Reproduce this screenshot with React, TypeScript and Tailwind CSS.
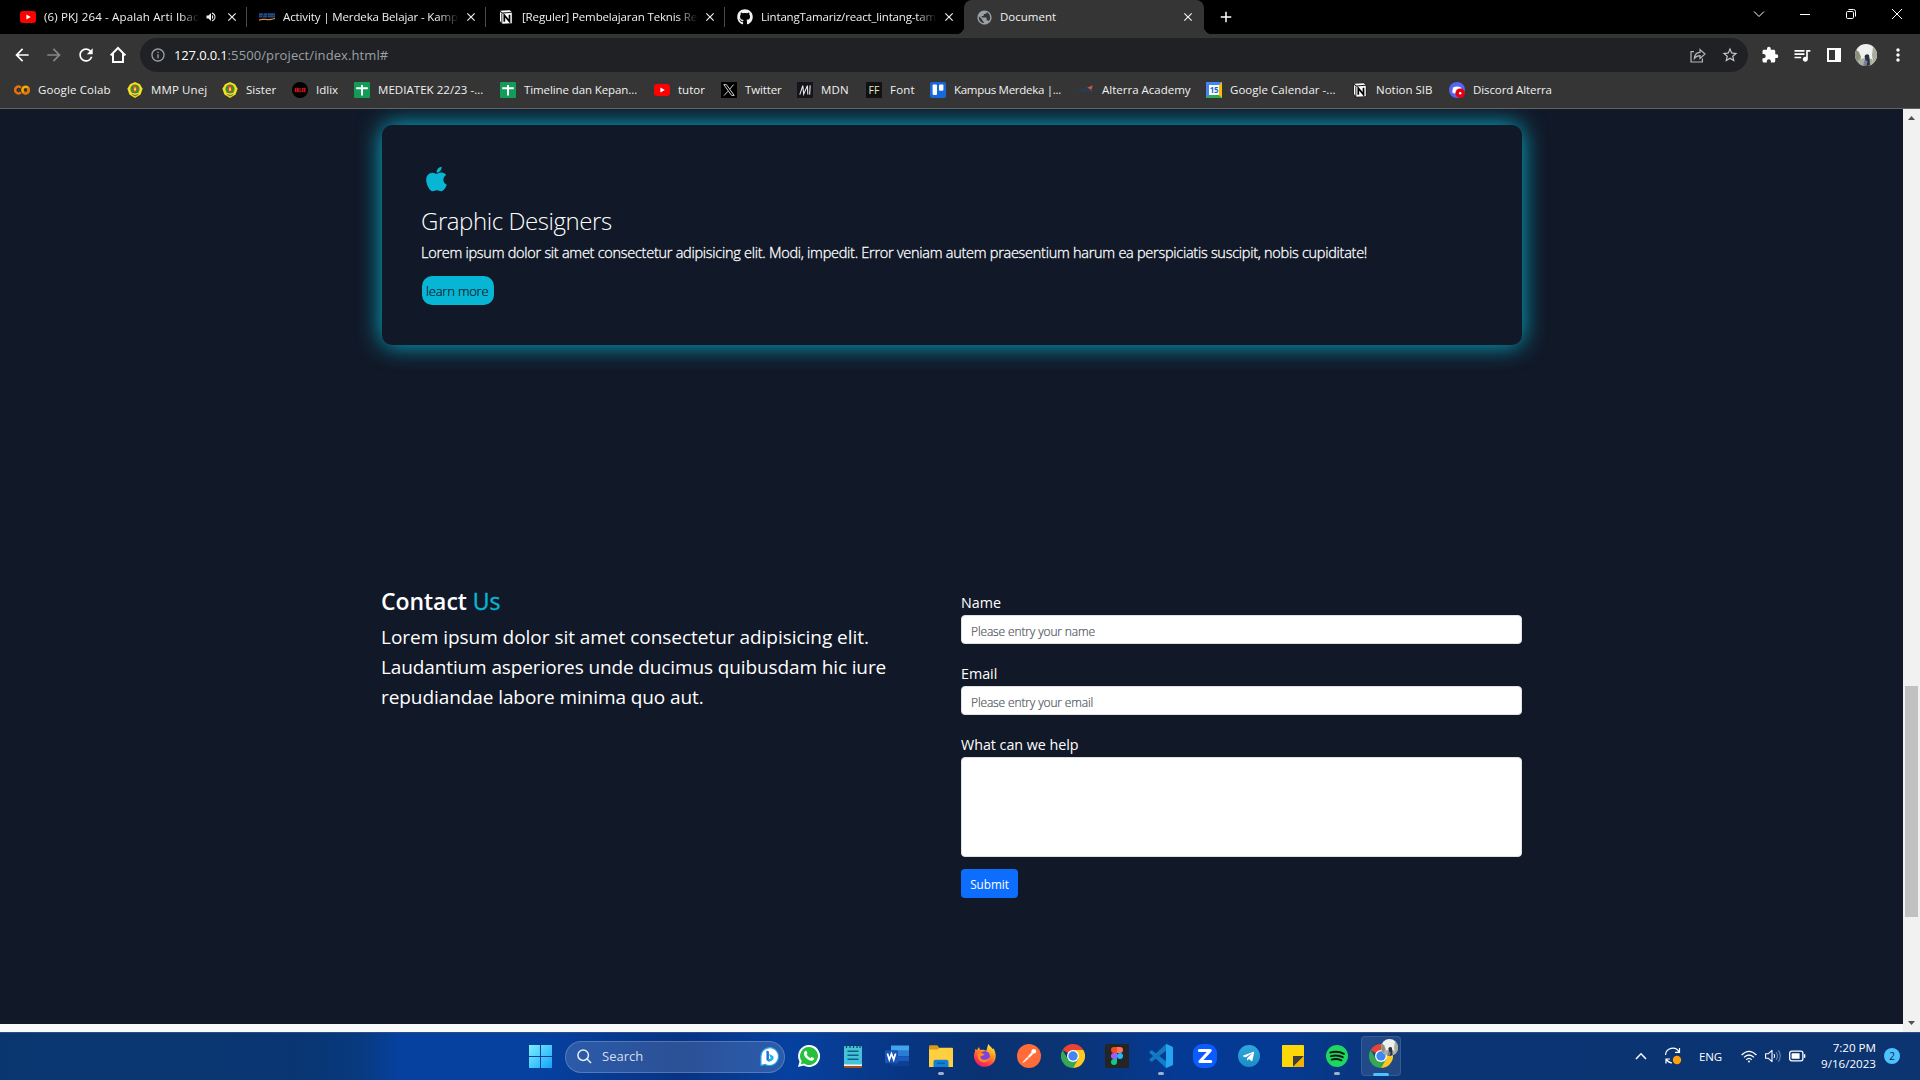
import type { ReactNode } from 'react';
import { FaApple, FaGithub, FaTelegramPlane } from 'react-icons/fa';
import {
  MdAdd,
  MdArrowBack,
  MdArrowForward,
  MdClose,
  MdExtension,
  MdInfoOutline,
  MdMoreVert,
  MdPublic,
  MdQueueMusic,
  MdRefresh,
  MdStarBorder,
  MdVolumeUp,
} from 'react-icons/md';

/* ---------- favicons ---------- */

const YouTube = () => (
  <svg viewBox="0 0 16 16" className="size-4">
    <rect x="0" y="2" width="16" height="12" rx="3" fill="#f00" />
    <path d="M6.4 5.4 10.8 8l-4.4 2.6z" fill="#fff" />
  </svg>
);

const Kampus = () => (
  <svg viewBox="0 0 16 16" className="size-4">
    <path d="M0 5.2h4M4.6 5.2h3.4M8.6 5.2h7.4M0 7.6h3.4M4 7.6h4.4M9 7.6h7" stroke="#1f4a8c" strokeWidth="2" />
    <path d="M0 10.6C4 8.6 8 11.6 16 8.8v1.2C9 12.6 4 10 0 11.8z" fill="#e58a3c" />
  </svg>
);

const Notion = () => (
  <svg viewBox="0 0 16 16" className="size-4">
    <path d="M1.6 1.4 11.8.8l2.6 2v12L4 15.4l-2.4-3z" fill="#111" />
    <path d="M2.2 1.8 11.6 1.2l2 1.6-9.3.6z" fill="#fff" />
    <path d="M4.3 4.4 13.8 3.8v10.4l-9.5.6z" fill="#fff" />
    <path d="M2 2.8l1.4 1.5v9.6L2 12z" fill="#fff" />
    <path d="M6.3 12.8V6.2l5.2 6.4V5.8" fill="none" stroke="#000" strokeWidth="1.7" />
  </svg>
);

const Colab = () => (
  <svg viewBox="0 0 16 16" className="size-4" fill="none" strokeWidth="2.5">
    <path d="M7 5.7A3.4 3.4 0 1 0 7 10.3" stroke="#e8710a" />
    <circle cx="11.6" cy="8" r="3.2" stroke="#f9ab00" />
    <path d="M9.3 10.3a3.2 3.2 0 0 0 4.6-4.5" stroke="#e8710a" />
  </svg>
);

const Unej = () => (
  <svg viewBox="0 0 16 16" className="size-4">
    <path d="M8 0l5 2.2 2.6 4.6-2 5.6L8 16l-5.6-3.6-2-5.6L3 2.2z" fill="#f4e01f" />
    <circle cx="8" cy="7" r="4.6" fill="#3a8d3a" />
    <path d="M8 2.400l2.600 4L8 10.800 5.400 6.400z" fill="#e8402a" />
    <path d="M8 4.400l1.200 3L8 9.400l-1.200-2z" fill="#ffe640" />
    <path d="M4 10.200q4 3 8 0l-1 2.800L8 14.600l-3-1.800z" fill="#8f7a17" />
    <path d="M4.400 11.400q3.600 1.800 7.200 0" stroke="#fff15a" fill="none" strokeWidth="1" />
  </svg>
);

const Idlix = () => (
  <svg viewBox="0 0 16 16" className="size-4">
    <circle cx="8" cy="8" r="8" fill="#000" />
    <path
      d="M3.4 6v4M5 6.3h1.200v3.400H5zM8 6v3.700h1.400M10.400 6v4M11.600 6l1.800 4M13.400 6l-1.800 4"
      stroke="#e0121a"
      strokeWidth="1.1"
      fill="none"
    />
  </svg>
);

const Sheets = () => (
  <svg viewBox="0 0 16 16" className="size-4">
    <rect width="16" height="16" rx="1" fill="#119c58" />
    <path d="M2.2 6.2h11.6M8 3v10.4" stroke="#fff" strokeWidth="2" />
  </svg>
);

const XLogo = () => (
  <svg viewBox="0 0 16 16" className="size-4">
    <rect width="16" height="16" fill="#000" />
    <path d="M2.8 2.6h2.6l7.8 10.8h-2.6z" stroke="#e7e7e7" strokeWidth=".9" fill="none" />
    <path d="M12.6 2.6 8.8 7M7 9.2l-4 4.4" stroke="#e7e7e7" strokeWidth=".9" />
  </svg>
);

const Mdn = () => (
  <svg viewBox="0 0 16 16" className="size-4">
    <rect width="16" height="16" fill="#15141a" />
    <path d="M2.8 12.6 5.8 3.6l.9 8.6 3.7-8.6.4 9M13.2 3.4l-.6 9.200" stroke="#e8e8e8" strokeWidth="1.1" fill="none" />
  </svg>
);

const FontFavicon = () => (
  <span className="flex size-4 items-center justify-center bg-[#111] text-[10.5px] leading-none tracking-normal text-[#e6e3d0]">
    FF
  </span>
);

const Trello = () => (
  <svg viewBox="0 0 16 16" className="size-4">
    <rect width="16" height="16" rx="2" fill="#1868db" />
    <rect x="2.6" y="2.6" width="4.4" height="10.4" rx="1" fill="#fff" />
    <rect x="9" y="2.6" width="4.4" height="6.2" rx="1" fill="#fff" />
  </svg>
);

const Alterra = () => (
  <svg viewBox="0 0 16 16" className="size-4">
    <path d="M1.4 9.6a1.8 1.8 0 1 1 2.8 0M5.6 10V7.2h2.6V10M9.4 8.6h3" stroke="#21406f" strokeWidth="1" fill="none" />
    <path d="M9.200 5.800 14.800 3.200l-1 3 .4 1.800z" fill="#d35b36" />
    <path d="M11 7.600l3-.8v2.800z" fill="#27509a" />
  </svg>
);

const Calendar = () => (
  <span className="flex size-4 shrink-0 border-[3px] border-t-[#4285f4] border-r-[#fbbc04] border-b-[#34a853] border-l-[#4285f4] bg-white">
    <span className="w-full text-center text-[8px] leading-[10px] font-bold tracking-tight text-[#1967d2]">15</span>
  </span>
);

const Discord = () => (
  <svg viewBox="0 0 16 16" className="size-4">
    <circle cx="8" cy="8" r="8" fill="#5865f2" />
    <path d="M4 5.6q4-2 8 0l1 4.6-2 1.4H5.2l-2-1.4z" fill="#fff" />
    <circle cx="11.2" cy="11.2" r="4.8" fill="#e60012" />
    <circle cx="11.2" cy="11.2" r="1.2" fill="#fff" />
  </svg>
);

/* ---------- browser chrome ---------- */

type Tab = { title: string; icon: ReactNode; tracking: string; muted?: boolean };

const tabs: Tab[] = [
  { title: '(6) PKJ 264 - Apalah Arti Ibadah', icon: <YouTube />, tracking: 'tracking-[0.16px]', muted: true },
  { title: 'Activity | Merdeka Belajar - Kampus', icon: <Kampus />, tracking: 'tracking-[-0.12px]' },
  { title: '[Reguler] Pembelajaran Teknis React', icon: <Notion />, tracking: 'tracking-[-0.14px]' },
  { title: 'LintangTamariz/react_lintang-tamariz', icon: <FaGithub className="size-4" />, tracking: 'tracking-[-0.17px]' },
];

function TabStrip() {
  return (
    <div className="flex h-[34px] bg-black pl-2 text-[11.5px] text-[#f1f1f1]">
      {tabs.map((tab, i) => (
        <div key={tab.title} className="flex w-[239px] shrink-0 items-center">
          <div className="flex w-[238px] items-center pl-3">
            {tab.icon}
            <div
              className={`ml-2 overflow-hidden whitespace-nowrap [mask-image:linear-gradient(to_right,#000_88%,transparent)] ${tab.muted ? 'w-[155px]' : 'w-[176px]'} ${tab.tracking}`}
            >
              {tab.title}
            </div>
            {tab.muted && <MdVolumeUp className="ml-[6px] size-3" />}
            <MdClose className={`size-[14px] ${tab.muted ? 'ml-[8px]' : 'ml-[5px]'}`} />
          </div>
          {i < 3 && <div className="h-5 w-px bg-[#4a4a4a]" />}
        </div>
      ))}
      <div className="relative flex w-60 shrink-0 items-center rounded-t-[8px] bg-[#353535] pl-3 before:absolute before:bottom-0 before:-left-2 before:size-2 before:bg-[radial-gradient(circle_at_0_0,transparent_8px,#353535_8.5px)] after:absolute after:-right-2 after:bottom-0 after:size-2 after:bg-[radial-gradient(circle_at_100%_0,transparent_8px,#353535_8.5px)]">
        <MdPublic className="size-[17px] text-[#9aa0a6]" />
        <span className="ml-[7px] w-[181px]">Document</span>
        <MdClose className="size-[14px]" />
      </div>
      <MdAdd className="mt-[8px] ml-[13px] size-[18px] shrink-0 text-white" />
      <div className="ml-auto flex h-7 text-white">
        <svg viewBox="0 0 46 28" className="h-7 w-[46px]" fill="none" stroke="currentColor">
          <path d="M18 11.5l5 5 5-5" />
        </svg>
        <svg viewBox="0 0 46 28" className="h-7 w-[46px]" fill="none" stroke="currentColor">
          <path d="M18 14.5h10" />
        </svg>
        <svg viewBox="0 0 46 28" className="h-7 w-[46px]" fill="none" stroke="currentColor">
          <rect x="18.5" y="11.5" width="7" height="7" rx="1.2" />
          <path d="M20.5 9.5h5a2 2 0 0 1 2 2v5" />
        </svg>
        <svg viewBox="0 0 46 28" className="h-7 w-[46px]" fill="none" stroke="currentColor">
          <path d="M18 9l10 10M28 9L18 19" />
        </svg>
      </div>
    </div>
  );
}

function Avatar({ className }: { className: string }) {
  return (
    <svg viewBox="0 0 22 22" className={className}>
      <defs>
        <clipPath id="avatar-clip">
          <circle cx="11" cy="11" r="11" />
        </clipPath>
      </defs>
      <g clipPath="url(#avatar-clip)">
        <rect width="22" height="22" fill="#eef0ee" />
        <path d="M0 5l4 3 2 5-2 9H0z" fill="#8b9179" />
        <path d="M18 3l4 2v12l-4 2-1-8z" fill="#a9ad9b" />
        <path d="M3 16l6-2 8 1 2 7H4z" fill="#aab0a2" />
        <path d="M9.5 12q2-3 4.500-1l.6 4 .4 7H9l1.400-6z" fill="#29303f" />
        <path d="M9.5 16l3 1-1 5H8z" fill="#77809a" />
      </g>
    </svg>
  );
}

function Toolbar() {
  return (
    <div className="flex h-[42px] items-center bg-[#353535] pl-3 text-white">
      <MdArrowBack className="size-5" />
      <MdArrowForward className="ml-3 size-5 text-[#868686]" />
      <MdRefresh className="ml-3 size-5" />
      <svg viewBox="0 0 20 20" className="ml-3 size-5" fill="none" stroke="currentColor" strokeWidth="2">
        <path d="M2.6 10.4 10 3l7.4 7.4M5 8.6V17h10V8.6" />
      </svg>
      <div className="ml-3 flex h-[34px] w-[1608px] items-center rounded-full bg-[#202124] pl-[10px] text-[13px]">
        <MdInfoOutline className="size-4 text-[#9aa0a6]" />
        <span className="mt-px ml-2 tracking-[-0.14px]">127.0.0.1</span>
        <span className="mt-px tracking-[0.1px] text-[#9aa0a6]">:5500/project/index.html#</span>
        <svg viewBox="0 0 16 16" className="mr-[15px] ml-auto size-4" fill="none" stroke="#b4b7bb" strokeWidth="1.2">
          <path d="M4 4.6H1V15h11.4v-3.4" />
          <path d="M4.4 11.4C4.6 7.6 6.8 5.6 10 5.4V2.6L15 7l-5 4.4V8.6C7.6 8.6 5.8 9.4 4.4 11.4z" />
        </svg>
        <MdStarBorder className="mr-[9px] size-[18px] text-[#c4c7cb]" />
      </div>
      <MdExtension className="ml-[13px] size-[18px]" />
      <MdQueueMusic className="ml-[13px] size-5" />
      <svg viewBox="0 0 14 14" className="ml-[15px] size-[14px]">
        <path fillRule="evenodd" d="M0 0h14v14H0zM2 2v10h6V2z" fill="#fff" />
      </svg>
      <Avatar className="ml-[14px] size-[22px]" />
      <MdMoreVert className="ml-[11px] size-5" />
    </div>
  );
}

const bookmarks: { label: string; icon: ReactNode; box: string }[] = [
  { label: 'Google Colab', icon: <Colab />, box: 'w-[113px] tracking-[0.12px]' },
  { label: 'MMP Unej', icon: <Unej />, box: 'w-[95px] tracking-[0.1px]' },
  { label: 'Sister', icon: <Unej />, box: 'w-[70px] tracking-[0.05px]' },
  { label: 'Idlix', icon: <Idlix />, box: 'w-[62px]' },
  { label: 'MEDIATEK 22/23 -...', icon: <Sheets />, box: 'w-[146px] tracking-[0.04px]' },
  { label: 'Timeline dan Kepan...', icon: <Sheets />, box: 'w-[154px] tracking-[-0.1px]' },
  { label: 'tutor', icon: <YouTube />, box: 'w-[67px]' },
  { label: 'Twitter', icon: <XLogo />, box: 'w-[76px] tracking-[-0.14px]' },
  { label: 'MDN', icon: <Mdn />, box: 'w-[69px] tracking-[0.2px]' },
  { label: 'Font', icon: <FontFavicon />, box: 'w-[64px] tracking-[0.2px]' },
  { label: 'Kampus Merdeka |...', icon: <Trello />, box: 'w-[148px] tracking-[-0.29px]' },
  { label: 'Alterra Academy', icon: <Alterra />, box: 'w-[128px]' },
  { label: 'Google Calendar -...', icon: <Calendar />, box: 'w-[146px] tracking-[0.04px]' },
  { label: 'Notion SIB', icon: <Notion />, box: 'w-[97px]' },
  { label: 'Discord Alterra', icon: <Discord />, box: 'w-[120px] tracking-[-0.1px]' },
];

function BookmarksBar() {
  return (
    <div className="flex h-[33px] border-b border-[#636363] bg-[#353535] pl-[14px] text-[11.5px] text-[#f1f1f1]">
      {bookmarks.map((b) => (
        <div key={b.label} className={`flex h-7 shrink-0 items-center gap-2 whitespace-nowrap ${b.box}`}>
          {b.icon}
          <span>{b.label}</span>
        </div>
      ))}
    </div>
  );
}

/* ---------- page ---------- */

function ServiceCard() {
  return (
    <article className="h-[220px] rounded-[10px] bg-[#111827] p-10 pl-[39px] shadow-[0_0_25px_#06b6d4]">
      <FaApple className="ml-[5px] h-7 w-[21px] text-[#06b6d4]" />
      <h3 className="mt-[13px] text-[24px] leading-[30px] font-light tracking-[-0.43px]">Graphic Designers</h3>
      <p className="mt-[5px] text-[14.5px] leading-6 font-light tracking-[-0.27px] whitespace-nowrap [-webkit-text-stroke:0.3px_currentColor]">
        Lorem ipsum dolor sit amet consectetur adipisicing elit. Modi, impedit. Error veniam autem praesentium harum ea
        perspiciatis suscipit, nobis cupiditate!
      </p>
      <button className="mt-[11px] ml-px flex h-[29px] w-[72px] items-center rounded-[10px] bg-[#06b6d4] pt-px pl-1 text-[13px] leading-none font-light tracking-[-0.2px] whitespace-nowrap text-[#111827] [-webkit-text-stroke:0.2px_currentColor]">
        learn more
      </button>
    </article>
  );
}

function Field({ label, placeholder }: { label: string; placeholder: string }) {
  return (
    <label className="mb-[19px] block">
      <span className="block pt-px leading-[19px]">{label}</span>
      <input
        placeholder={placeholder}
        className="mt-[3px] block h-[29px] w-full rounded-[4px] border border-[#dee2e6] bg-white px-[9px] pt-[3px] text-[12px] font-light tracking-[-0.14px] [-webkit-text-stroke:0.2px_#4b535b] placeholder:text-[#4b535b] placeholder:opacity-100"
      />
    </label>
  );
}

function Contact() {
  return (
    <section className="mt-[242px] flex">
      <div className="-ml-px w-[580px]">
        <h2 className="text-[23px] leading-7 font-semibold tracking-[-0.05px]">
          Contact{' '}
          <span className="font-normal text-[#06b6d4] [-webkit-text-stroke:0.4px_currentColor]">Us</span>
        </h2>
        <p className="mt-[7px] text-[19px] leading-[30px] whitespace-nowrap">
          <span className="block tracking-[-0.03px]">Lorem ipsum dolor sit amet consectetur adipisicing elit.</span>
          <span className="block tracking-[-0.12px]">Laudantium asperiores unde ducimus quibusdam hic iure</span>
          <span className="block tracking-[-0.08px]">repudiandae labore minima quo aut.</span>
        </p>
      </div>
      <form className="w-[561px] pt-[5px] text-[14.3px]">
        <Field label="Name" placeholder="Please entry your name" />
        <Field label="Email" placeholder="Please entry your email" />
        <label className="block">
          <span className="block pt-px leading-[19px] tracking-[-0.03px]">What can we help</span>
          <textarea className="mt-[3px] block h-[100px] w-full resize-none rounded-[4px] border border-[#dee2e6] bg-white" />
        </label>
        <button
          type="button"
          className="mt-3 flex h-[29px] w-[57px] items-center justify-center rounded-[4px] bg-[#0d6efd] pt-[2px] text-[11.7px]"
        >
          Submit
        </button>
      </form>
    </section>
  );
}

function Scrollbar() {
  return (
    <div className="flex h-[923px] w-[17px] shrink-0 flex-col items-center bg-[#f1f1f1]">
      <svg viewBox="0 0 17 17" className="h-[17px] w-[17px]">
        <path d="M8.5 7l3.5 4H5z" fill="#505050" />
      </svg>
      <div className="mt-[560px] h-[231px] w-[13px] bg-[#c1c1c1]" />
      <svg viewBox="0 0 17 17" className="mt-auto h-[17px] w-[17px]">
        <path d="M5 6h7l-3.5 4z" fill="#505050" />
      </svg>
    </div>
  );
}

/* ---------- taskbar ---------- */

const Bing = () => (
  <svg viewBox="0 0 20 20" className="size-[19px]">
    <path d="M10 .6A9.4 9.4 0 1 1 5.6 18.3L1 19.4V10A9.2 9.2 0 0 1 10 .6z" fill="#fff" stroke="#2aa5e6" strokeWidth="1.2" />
    <path d="M6.8 3.8v10l2.6 1.8V4.8z" fill="#1b6fe0" />
    <path d="M9.4 7.4l4.4 2.2q1.6 3.2-1.4 4.8l-3.2 1.4v-2.8l2.2-1.2z" fill="#22b0ea" />
  </svg>
);

const Whatsapp = () => (
  <svg viewBox="0 0 22 22" className="size-[22px]">
    <path d="M11 0A11 11 0 1 1 5.7 20.6L0 22l1.5-5.5A11 11 0 0 1 11 0z" fill="#fff" />
    <path d="M11 2A9 9 0 1 1 6 18.5l-3.2.9.9-3.2A9 9 0 0 1 11 2z" fill="#25c03c" />
    <path
      d="M7.3 6c.7-.5 1.100-.2 1.300.2l.8 1.900c.1.4-.8 1.300-.7 1.500.7 1.500 2 2.700 3.600 3.400.4.1 1-1.200 1.400-1.100l2.200 1.100c.4.3 0 1.600-.5 2.100-3 2.300-9.700-2.600-9.500-6.900 0-.9.7-1.700 1.400-2.200z"
      fill="#fff"
    />
  </svg>
);

const Notepad = () => (
  <svg viewBox="0 0 24 24" className="size-6">
    <rect x="3" y="20" width="18" height="4" rx="1" fill="#a8510f" />
    <rect x="3" y="18" width="18" height="4" fill="#f3f6f8" />
    <rect x="3" y="2" width="18" height="18.5" rx="1" fill="#45c1dc" />
    <path d="M5.5 0v4M9 0v4M12.5 0v4M16 0v4M19 0v4" stroke="#123f57" strokeWidth="1.2" />
    <path d="M6.5 7.3h11M6.5 11.3h11M6.5 15.3h11" stroke="#0c6380" strokeWidth="1.5" />
  </svg>
);

const Word = () => (
  <svg viewBox="0 0 24 24" className="size-6">
    <path d="M6 1.5h18v5.3H6z" fill="#41a5ee" />
    <path d="M6 6.8h18v5.3H6z" fill="#2b7cd3" />
    <path d="M6 12.1h18v5.3H6z" fill="#185abd" />
    <path d="M6 17.4h18v4.7H6z" fill="#103f91" />
    <rect x="0" y="6.2" width="13" height="13" rx="1" fill="#1a55b5" />
    <path d="M2.4 9.4l1.9 6.200 2.200-6 2.200 6 1.900-6.200" stroke="#fff" strokeWidth="1.7" fill="none" />
  </svg>
);

const Explorer = () => (
  <svg viewBox="0 0 24 24" className="size-6">
    <path d="M0 2.5A1.2 1.2 0 0 1 1.2 1.3h7L11 4.4V9H0z" fill="#d99a14" />
    <path d="M0 5.5h8.5L11 3.700h12a1 1 0 0 1 1 1V23H0z" fill="#ffcf3f" />
    <path d="M4.5 23v-5.300a2 2 0 0 1 2-2h11a2 2 0 0 1 2 2V23z" fill="#1181d6" />
    <path d="M8 19.2h8" stroke="#0a5ea8" strokeWidth="1.3" />
  </svg>
);

const Firefox = () => (
  <svg viewBox="0 0 24 24" className="size-6">
    <defs>
      <linearGradient id="firefox" x1=".8" y1="0" x2=".3" y2="1">
        <stop offset="0" stopColor="#fff044" />
        <stop offset=".4" stopColor="#ff9a1f" />
        <stop offset=".75" stopColor="#ff3d47" />
        <stop offset="1" stopColor="#e81b72" />
      </linearGradient>
    </defs>
    <path
      d="M15.5 0c1 2 3.500 3.500 4.300 5.200l.7-1c3 5 3.200 11-.5 15-4 4.400-11.300 4.800-15.600.7C1 16.500 0 11.500 2 7.500L2.200 4.800l1.600 1.300L6 3l1.200 3C10 5.500 12 6 13 7c1.500-2 1-5 2.500-7z"
      fill="url(#firefox)"
    />
    <circle cx="11.8" cy="12.3" r="5.2" fill="#7b43dc" />
    <path d="M5 9.5c2-1.500 4-.5 6.500.8-1 2-3.500 1.200-4.300 2.600C8.500 16.500 14 17 17 13c-.5 5-7 7-10.500 3.500C4.500 14.500 4 11.500 5 9.500z" fill="#ff8a1e" />
  </svg>
);

const Postman = () => (
  <svg viewBox="0 0 24 24" className="size-6">
    <circle cx="12" cy="12" r="12" fill="#ff6c37" />
    <path d="M5.5 18.500l5-5.500 4-4.500 1.500 1.500-4.500 4.300-4 3.400z" fill="#fff" stroke="#ffe1d6" strokeWidth=".6" />
    <circle cx="16.8" cy="7.3" r="2.4" fill="#fff" />
    <path d="M10 12.4l2.4 2.3" stroke="#ff6c37" strokeWidth=".8" />
  </svg>
);

const Chrome = () => (
  <svg viewBox="0 0 24 24" className="size-6">
    <path d="M12 12 1.6 6A12 12 0 0 1 22.4 6z" fill="#ea4335" />
    <path d="M12 24A12 12 0 0 1 1.6 6l5.200 9L12 18l5.200-3z" fill="#34a853" />
    <path d="M17.2 15 12 24a12 12 0 0 0 10.400-18H12z" fill="#fdc81f" />
    <circle cx="12" cy="12" r="6" fill="#fff" />
    <circle cx="12" cy="12" r="4.7" fill="#4285f4" />
  </svg>
);

const Figma = () => (
  <svg viewBox="0 0 24 24" className="size-6">
    <rect width="24" height="24" rx="1.5" fill="#252525" />
    <path d="M12 3H9a3 3 0 0 0 0 6h3z" fill="#f24e1e" />
    <path d="M12 3h3a3 3 0 0 1 0 6h-3z" fill="#ff7262" />
    <path d="M12 9H9a3 3 0 0 0 0 6h3z" fill="#a259ff" />
    <circle cx="15" cy="12" r="3" fill="#1abcfe" />
    <path d="M12 15H9a3 3 0 1 0 3 3z" fill="#0acf83" />
  </svg>
);

const VsCode = () => (
  <svg viewBox="0 0 24 24" className="size-6">
    <path d="M0 8.3 2 6.4a1 1 0 0 1 1.200 0L18 18v5.600L17 24z" fill="#0f7fc9" />
    <path d="M0 15.7l2 1.900a1 1 0 0 0 1.200 0L18 6V.4L17 0z" fill="#1478bd" />
    <path d="M17.5 0 23 2.4a1.500 1.500 0 0 1 1 1.400v16.400a1.500 1.500 0 0 1-1 1.400L17.500 24c-.5-.3-.5-.8-.5-1.200V1.200c0-.5 0-.9.500-1.200z" fill="#25a5f1" />
  </svg>
);

const Zoom = () => (
  <svg viewBox="0 0 24 24" className="size-6">
    <rect width="24" height="24" rx="9" fill="#0b5cff" />
    <path d="M6.5 6.5h10.700L7 17.500h10.700" fill="none" stroke="#fff" strokeWidth="3.2" strokeLinejoin="round" strokeLinecap="round" />
  </svg>
);

const Telegram = () => (
  <span className="flex size-[22px] items-center justify-center rounded-full bg-linear-to-b from-[#2fa8df] to-[#1c8cc6]">
    <FaTelegramPlane className="mr-[2px] size-[13px] text-white" />
  </span>
);

const Sticky = () => (
  <svg viewBox="0 0 22 22" className="size-[22px]">
    <rect width="22" height="22" rx=".8" fill="#fed709" />
    <path d="M11 11h11L11 22z" fill="#3d3d3d" />
    <path d="M22 11v11H11z" fill="#f0b400" />
  </svg>
);

const Spotify = () => (
  <svg viewBox="0 0 22 22" className="size-[22px]">
    <circle cx="11" cy="11" r="11" fill="#1ed760" />
    <path
      d="M4.200 7.600q7.500-2.200 13.800 1.200M5 11.200q6.400-1.800 11.800 1M5.600 14.600q5-1.400 9.800.8"
      fill="none"
      stroke="#0e1a12"
      strokeWidth="1.9"
      strokeLinecap="round"
    />
  </svg>
);

const apps: { name: string; icon: ReactNode; running?: boolean }[] = [
  { name: 'whatsapp', icon: <Whatsapp /> },
  { name: 'notepad', icon: <Notepad /> },
  { name: 'word', icon: <Word /> },
  { name: 'explorer', icon: <Explorer />, running: true },
  { name: 'firefox', icon: <Firefox /> },
  { name: 'postman', icon: <Postman /> },
  { name: 'chrome', icon: <Chrome /> },
  { name: 'figma', icon: <Figma /> },
  { name: 'vscode', icon: <VsCode />, running: true },
  { name: 'zoom', icon: <Zoom /> },
  { name: 'telegram', icon: <Telegram /> },
  { name: 'sticky', icon: <Sticky /> },
  { name: 'spotify', icon: <Spotify />, running: true },
];

function Taskbar() {
  return (
    <div className="flex h-12 items-center border-t border-[#2b4f82] bg-[linear-gradient(90deg,#0a3670_0px,#093672_300px,#083a80_360px,#0641a0_400px,#0641a0_540px,#073384_680px,#0641a0_790px,#083684_900px,#0a3272_980px,#0a3474_1060px,#053a94_1180px,#053a94_1280px,#0a3474_1400px,#0b3470_1920px)] pl-[529px] text-white">
      <svg viewBox="0 0 23 23" className="size-[23px] shrink-0">
        <defs>
          <linearGradient id="start" x1="0" y1="0" x2="1" y2="1">
            <stop offset="0" stopColor="#7ef0ff" />
            <stop offset="1" stopColor="#12a3f7" />
          </linearGradient>
        </defs>
        <path d="M0 0h11v11H0zM12 0h11v11H12zM0 12h11v11H0zM12 12h11v11H12z" fill="url(#start)" />
      </svg>
      <div className="ml-[13px] flex h-8 w-[220px] shrink-0 items-center rounded-full border border-white/20 bg-white/15 pr-[5px] pl-[11px]">
        <svg viewBox="0 0 16 16" className="size-[15px]" fill="none" stroke="#e8edf5" strokeWidth="1.6">
          <circle cx="6.6" cy="6.6" r="5.6" />
          <path d="M10.7 10.7 15 15" />
        </svg>
        <span className="ml-[10px] text-[13px] text-[#d5deee]">Search</span>
        <span className="-mt-px ml-auto">
          <Bing />
        </span>
      </div>
      <div className="ml-[2px] flex h-full">
        {apps.map((app) => (
          <div key={app.name} className="relative flex w-11 items-center justify-center pb-px">
            {app.icon}
            {app.running && <span className="absolute bottom-[5px] h-[3px] w-[6px] rounded-full bg-[#9fb0cc]" />}
          </div>
        ))}
        <div className="relative mt-[3px] ml-[2px] flex size-10 items-center justify-center rounded-[4px] border border-white/10 bg-white/10">
          <Chrome />
          <Avatar className="absolute top-[2px] right-[2px] size-[17px]" />
          <span className="absolute -bottom-px h-[3px] w-4 rounded-full bg-[#4cc2ff]" />
        </div>
      </div>

      <div className="ml-auto flex items-center pr-[20px] pb-px">
        <svg viewBox="0 0 12 8" className="h-2 w-3" fill="none" stroke="#fff" strokeWidth="1.5">
          <path d="M1 7l5-5.200L11 7" />
        </svg>
        <svg viewBox="0 0 18 18" className="ml-[17px] size-[18px]" fill="none" stroke="#fff" strokeWidth="1.2">
          <path d="M1.5 8A7.200 7.200 0 0 1 15 5M15.500 1v4.400H11M2 16.500V12h4M2.400 12.400A7 7 0 0 0 8 16" />
          <circle cx="13" cy="13" r="4.2" fill="#ff9d0a" stroke="none" />
        </svg>
        <span className="mt-px ml-[17px] w-6 text-[11.5px] tracking-[-0.15px]">ENG</span>
        <svg viewBox="0 0 16 13" className="ml-[18px] h-[13px] w-4" fill="none" stroke="#fff" strokeWidth="1.3">
          <path d="M.6 5Q8-2.200 15.400 5M3 7.400q5-4.800 10 0M5.300 9.700q2.700-2.600 5.400 0" />
          <circle cx="8" cy="11.6" r="1" fill="#fff" stroke="none" />
        </svg>
        <svg viewBox="0 0 17 14" className="ml-[8px] h-[14px] w-[17px]" fill="none" stroke="#fff" strokeWidth="1.1">
          <path d="M.6 4.800h2.600L7 1.400v11.200L3.200 9.200H.6z" strokeLinejoin="round" />
          <path d="M9 5q1.300 2 0 4" />
          <path d="M11.200 3.200q2.600 3.800 0 7.600M13.400 1.400q3.800 5.600 0 11.200" stroke="#6d87b0" />
        </svg>
        <svg viewBox="0 0 17 12" className="ml-[7px] h-3 w-[17px]" fill="none" stroke="#fff">
          <rect x=".7" y="1.2" width="13.2" height="9.6" rx="2" strokeWidth="1.3" />
          <rect x="2.6" y="3.2" width="8" height="5.6" rx=".5" fill="#fff" stroke="none" />
          <path d="M15.600 4.200v3.600" strokeWidth="1.5" />
        </svg>
        <div className="ml-[13px] w-[57px] text-right text-[11.6px] leading-4">
          <div>7:20 PM</div>
          <div>9/16/2023</div>
        </div>
        <span className="ml-[8px] flex size-4 items-center justify-center rounded-full bg-[#4cc2ff] text-[10px] leading-none text-[#10243c]">
          2
        </span>
      </div>
    </div>
  );
}

export default function App() {
  return (
    <div className="flex h-[1080px] w-[1920px] flex-col overflow-hidden font-['Open_Sans','Noto_Sans',sans-serif] leading-normal text-white">
      <TabStrip />
      <Toolbar />
      <BookmarksBar />
      <div className="flex h-[923px]">
        <main className="flex-1 overflow-hidden border-b-8 border-[#f8fafc] bg-[#111827] pt-4 pl-[382px]">
          <div className="w-[1140px]">
            <ServiceCard />
            <Contact />
          </div>
        </main>
        <Scrollbar />
      </div>
      <Taskbar />
    </div>
  );
}
